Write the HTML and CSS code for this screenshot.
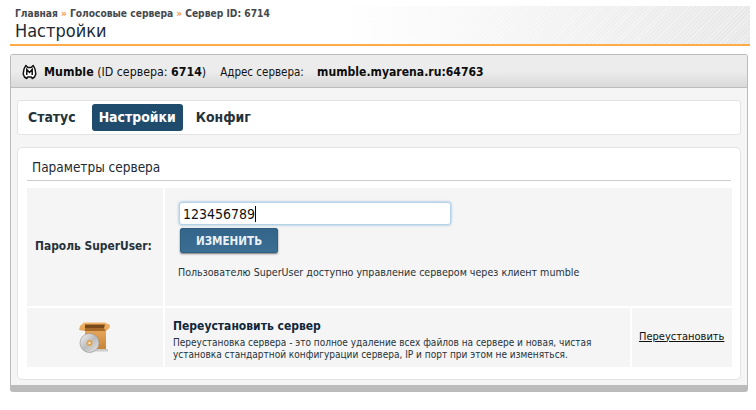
FILE: index.html
```html
<!DOCTYPE html>
<html lang="ru">
<head>
<meta charset="utf-8">
<title>Настройки</title>
<link rel="stylesheet" href="styles.css">
</head>
<body>
<header class="page-head">
  <nav class="crumbs"><a>Главная</a><span class="sep">»</span><a>Голосовые сервера</a><span class="sep">»</span><a>Сервер ID: 6714</a></nav>
  <h1>Настройки</h1>
</header>
<main class="panel">
  <div class="panel-head">
    <svg class="mumble" width="15" height="16" viewBox="0 0 15 16"><path d="M3.8 1.5 5.8 3.5H9.2L11.2 1.5 13 5 13.8 10 12.5 13 10.2 14.5 9.5 13H5.5L4.8 14.5 2.5 13 1.2 10 2 5Z" fill="#fff" stroke="#111" stroke-width="1.5" stroke-linejoin="round"/><path d="M4.8 11V5.5L7.5 8.5 10.2 5.5V11" fill="none" stroke="#111" stroke-width="1.5"/></svg>
    <span class="srv"><b>Mumble</b> (ID сервера: <b>6714</b>)</span>
    <span class="addr">Адрес сервера: <b>mumble.myarena.ru:64763</b></span>
  </div>
  <div class="panel-body">
    <div class="tabs">
      <a class="tab">Статус</a>
      <a class="tab active">Настройки</a>
      <a class="tab">Конфиг</a>
    </div>
    <section class="card">
      <h2>Параметры сервера</h2>
      <div class="grid">
        <div class="cell label">Пароль SuperUser:</div>
        <div class="cell form wide">
          <div class="input">123456789<span class="caret"></span></div>
          <button class="btn" type="button">ИЗМЕНИТЬ</button>
          <p class="hint">Пользователю SuperUser доступно управление сервером через клиент mumble</p>
        </div>
        <div class="cell icon">
          <svg width="34" height="34" viewBox="0 0 34 34">
            <defs>
              <linearGradient id="bx" x1="0" y1="0" x2="0" y2="1"><stop offset="0" stop-color="#f2b468"/><stop offset="1" stop-color="#c98436"/></linearGradient>
              <linearGradient id="cd" x1="0" y1="0" x2="1" y2="1"><stop offset="0" stop-color="#f6f6f6"/><stop offset=".5" stop-color="#bcbcbc"/><stop offset="1" stop-color="#e6e6e6"/></linearGradient>
            </defs>
            <path d="M8 28H31V30.5H8Z" fill="#ccc"/>
            <path d="M2 9 3 5 7 1.5H28L33 4 32.5 7 29 10V28H8V10Z" fill="url(#bx)"/>
            <path d="M8 3.5H28L27 7H8Z" fill="#7a4a18"/>
            <path d="M8 7H27L28.5 10H8Z" fill="#a86a28"/>
            <circle cx="12.5" cy="22" r="9.5" fill="url(#cd)" stroke="#9a9a9a" stroke-width=".7"/>
            <circle cx="12.5" cy="22" r="3" fill="#e2a352"/>
            <circle cx="12.5" cy="22" r="1.1" fill="#f6f6f6"/>
          </svg>
        </div>
        <div class="cell info">
          <h3>Переустановить сервер</h3>
          <p>Переустановка сервера - это полное удаление всех файлов на сервере и новая, чистая установка стандартной конфигурации сервера, IP и порт при этом не изменяться.</p>
        </div>
        <div class="cell action"><a href="#">Переустановить</a></div>
      </div>
    </section>
  </div>
</main>
</body>
</html>
```
FILE: styles.css
```css
* { box-sizing: border-box; }
html, body { height: 100%; }
body {
  margin: 0;
  padding: 6px 6px 0 10px;
  background: #fff;
  font-family: "DejaVu Sans", sans-serif;
  font-stretch: condensed;
  color: #111;
  overflow: hidden;
}
.page-head {
  height: 40px;
  padding: 0 0 0 5px;
  border-bottom: 2px solid #ffab47;
  background:
    repeating-linear-gradient(135deg, rgba(255,255,255,.35) 0 1px, transparent 1px 3px),
    linear-gradient(90deg, #fff 0, #fff 45%, #e8e8e8 100%);
}
.crumbs {
  display: flex;
  gap: 3px;
  height: 14px;
  font-size: 10.2px;
  line-height: 15px;
  font-weight: bold;
  color: #45494e;
}
.crumbs .sep { color: #f29a4a; }
h1 {
  margin: 0;
  font-size: 18px;
  line-height: 21px;
  font-weight: normal;
  color: #1d2a33;
}
.panel {
  width: 738px;
  margin-top: 8px;
  border: 1px solid #bbb;
  border-bottom-width: 7px;
  border-radius: 3px;
  background: #f5f5f5;
}
.panel-head {
  display: flex;
  align-items: center;
  height: 33px;
  padding: 2px 0 0 11px;
  border-bottom: 1px solid #bdbdbd;
  background: linear-gradient(#ececec 0, #ececec 50%, #d9d9d9 100%);
  font-size: 12.3px;
}
.mumble { margin-right: 7px; }
.srv b, .addr b { color: #0c0c0c; }
.addr { margin-left: 14px; font-size: 11.5px; }
.addr b { margin-left: 10px; font-size: 12.1px; }
.panel-body { padding: 12px 6px 5px 6px; }
.tabs {
  display: flex;
  align-items: center;
  gap: 6px;
  height: 35px;
  padding: 0 3px;
  background: #fff;
  border: 1px solid #e3e3e3;
  border-radius: 3px;
}
.tab {
  padding: 0 7px;
  height: 27px;
  line-height: 26px;
  font-size: 13.9px;
  font-weight: bold;
  color: #26323a;
  border-radius: 3px;
}
.tab.active { margin-left: 3px; background: #1f4c6c; color: #fff; }
.card {
  margin-top: 12px;
  height: 233px;
  padding: 0 9px;
  background: #fff;
  border: 1px solid #e3e3e3;
  border-radius: 5px;
}
h2 {
  margin: 0;
  height: 33px;
  padding: 10px 0 0 5px;
  border-bottom: 1px solid #ccc;
  font-size: 13.5px;
  line-height: 18px;
  font-weight: normal;
  color: #1d2a33;
}
.grid {
  display: grid;
  grid-template-columns: 136px 465px 100px;
  grid-template-rows: 118px 59px;
  gap: 2px;
  margin-top: 7px;
}
.cell { background: #f5f5f5; }
.label {
  display: flex;
  align-items: center;
  padding: 0 0 2px 8px;
  font-size: 11.9px;
  font-weight: bold;
  color: #26323a;
}
.wide { grid-column: 2 / 4; }
.form { padding: 14px 0 0 14px; }
.input {
  width: 272px;
  height: 23px;
  padding: 1px 0 0 3px;
  background: #fff;
  border: 1px solid #b5d3e8;
  border-radius: 3px;
  box-shadow: 0 0 3px #8ab8d8;
  font-size: 14px;
  line-height: 21px;
  color: #111;
}
.caret {
  display: inline-block;
  width: 1px;
  height: 16px;
  background: #000;
  vertical-align: -3px;
}
.btn {
  display: block;
  width: 98px;
  height: 25px;
  margin: 3px 0 0 1px;
  padding: 0;
  background: linear-gradient(#33658a, #3c6e93);
  border: 1px solid #2f5f80;
  border-radius: 2px;
  box-shadow: 0 1px 2px #777;
  font-family: inherit;
  font-stretch: condensed;
  font-size: 11.6px;
  font-weight: bold;
  color: #eaf2f7;
}
.hint {
  margin: 13px 0 0 -1px;
  font-size: 10.6px;
  line-height: 13px;
  color: #26323a;
}
.icon { display: flex; align-items: center; justify-content: center; padding-right: 2px; }
.info { padding: 11px 8px 0 8px; }
h3 {
  margin: 0;
  font-size: 12px;
  line-height: 15px;
  font-weight: bold;
  color: #10283a;
}
.info p {
  margin: 3px 0 0;
  font-size: 10px;
  line-height: 12px;
  color: #26323a;
}
.action {
  display: flex;
  align-items: center;
  padding-left: 7px;
  padding-bottom: 3px;
  font-size: 11px;
}
.action a { color: #111; text-decoration: underline; }
```
